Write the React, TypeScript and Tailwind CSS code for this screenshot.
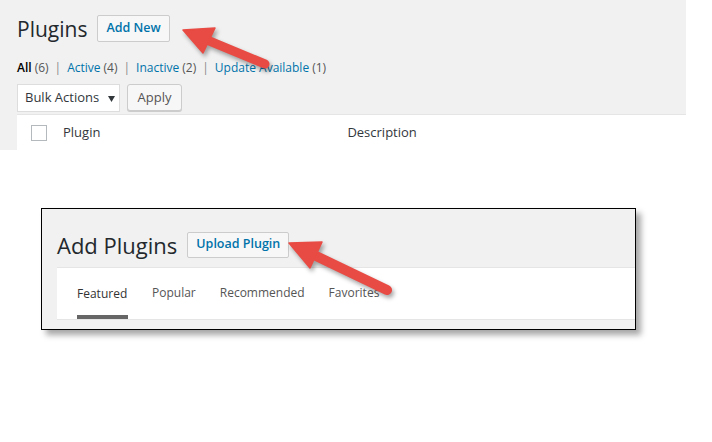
import React from "react";

export default function App() {
  const font = { fontFamily: '"Open Sans", "Noto Sans", sans-serif' };
  return (
    <div className="relative w-[712px] h-[442px] bg-white overflow-hidden" style={font}>
      {/* Top: Plugins screen */}
      <div className="w-[686px] h-[150px] bg-[#f1f1f1] pl-[17px] flex flex-col">
        <div className="flex items-center pt-[15px] h-[42px]">
          <h1 className="text-[21px] leading-none text-[#23282d] mt-[1px]">Plugins</h1>
          <button className="ml-[10px] h-[27px] px-[8px] border border-[#ccc] bg-[#f7f7f7] rounded-[2px] text-[12.5px] font-semibold text-[#0073aa] leading-none">
            Add New
          </button>
        </div>
        <div className="mt-[18px] h-[16px] flex items-center text-[12px] leading-none text-[#555] whitespace-nowrap">
          <span className="text-black font-semibold">All</span>
          <span className="ml-[3px]">(6)</span>
          <span className="mx-[6px] text-[#888]">|</span>
          <span className="text-[#0073aa]">Active</span>
          <span className="ml-[3px]">(4)</span>
          <span className="mx-[6px] text-[#888]">|</span>
          <span className="text-[#0073aa]">Inactive</span>
          <span className="ml-[3px]">(2)</span>
          <span className="mx-[6px] text-[#888]">|</span>
          <span className="text-[#0073aa]">Update Available</span>
          <span className="ml-[3px]">(1)</span>
        </div>
        <div className="mt-[8px] flex items-start">
          <div className="w-[103px] h-[28px] bg-white border border-[#ddd] flex items-center pl-[7px] text-[13px] text-[#32373c]">
            <span>Bulk Actions</span>
            <svg className="ml-[9px]" width="7" height="7" viewBox="0 0 7 7">
              <polygon points="0,1 7,1 3.5,7" fill="#32373c" />
            </svg>
          </div>
          <button className="ml-[7px] w-[55px] h-[27px] bg-[#f7f7f7] border border-[#ccc] rounded-[3px] shadow-[0_1px_0_#ccc] text-[13px] text-[#555] leading-none">
            Apply
          </button>
        </div>
        <div className="mt-[2px] flex-1 bg-white border-t border-[#e5e5e5] flex items-center text-[13px] text-[#32373c]">
          <div className="ml-[14px] w-[16px] h-[16px] border border-[#b4b9be] bg-white" />
          <span className="ml-[16px]">Plugin</span>
          <span className="ml-[247px]">Description</span>
        </div>
      </div>

      {/* Bottom: Add Plugins screen */}
      <div className="ml-[41px] mt-[58px] w-[595px] h-[122px] border border-black bg-[#f1f1f1] shadow-[5px_5px_6px_rgba(0,0,0,0.35)] flex flex-col pl-[15px]">
        <div className="flex items-center h-[57px] pt-[14px]">
          <h1 className="text-[22px] leading-none text-[#23282d]">Add Plugins</h1>
          <button className="ml-[10px] h-[26px] px-[8px] border border-[#ccc] bg-[#f7f7f7] rounded-[2px] text-[12.5px] font-semibold text-[#0073aa] leading-none">
            Upload Plugin
          </button>
        </div>
        <div className="mt-[1px] h-[53px] bg-white border-t border-b border-[#e5e5e5] flex items-stretch pl-[20px] gap-[24px] text-[12px] text-[#555]">
          <div className="flex flex-col justify-end">
            <span className="text-[#333] mb-[12px]">Featured</span>
            <div className="h-[4px] bg-[#666] w-[51px]" />
          </div>
          <div className="flex items-center pb-[1px]">Popular</div>
          <div className="flex items-center pb-[1px]">Recommended</div>
          <div className="flex items-center pb-[1px]">Favorites</div>
        </div>
      </div>

      {/* Arrows overlay */}
      <svg
        className="absolute inset-0 pointer-events-none"
        width="712"
        height="442"
        viewBox="0 0 712 442"
        style={{ filter: "drop-shadow(2px 3px 2px rgba(0,0,0,0.35))" }}
      >
        <g fill="#e84b43" stroke="#e84b43" strokeLinejoin="round">
          <line x1="207" y1="40" x2="265" y2="64" strokeWidth="9" strokeLinecap="round" />
          <polygon points="183,30 215,28 203,53" strokeWidth="1.5" />
          <line x1="314" y1="255" x2="387" y2="290" strokeWidth="10" strokeLinecap="round" />
          <polygon points="289,243 322,242 310,268" strokeWidth="1.5" />
        </g>
      </svg>
    </div>
  );
}
